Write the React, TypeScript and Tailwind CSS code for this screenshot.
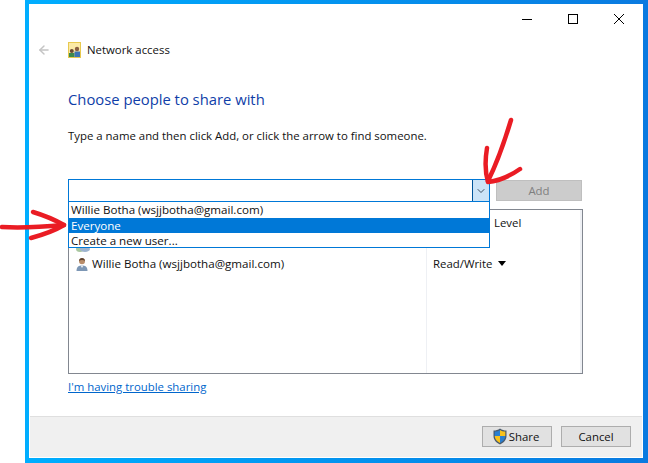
import { ArrowLeft, ChevronDown } from 'lucide-react';

function UserIcon() {
  return (
    <svg width="16" height="16" viewBox="0 0 16 16">
      <path d="M2.5 15 C2.5 10.5 5 9.5 8 9.5 C11 9.5 13.5 10.5 13.5 15 Z" fill="#7d97b5" />
      <path d="M6.5 9.5 L8 12 L9.5 9.5 Z" fill="#e8edf2" />
      <circle cx="8" cy="5.2" r="3" fill="#b98d6a" />
      <path d="M5 5 C5 1 11 1 11 5 C9.5 3.8 6.5 3.8 5 5 Z" fill="#5f4330" />
    </svg>
  );
}

function PeopleIcon() {
  return (
    <svg width="13" height="16" viewBox="0 0 13 16">
      <rect x="0.5" y="0.5" width="12" height="15" fill="#fbe9a6" stroke="#e8c94f" />
      <circle cx="3.8" cy="9" r="2" fill="#6b4a34" />
      <rect x="1" y="11" width="5.5" height="4" fill="#3d8a4d" />
      <circle cx="9" cy="7" r="2.2" fill="#8a5f42" />
      <rect x="6.5" y="9.5" width="5.5" height="5.5" fill="#3d74b5" />
    </svg>
  );
}

// only the bottom of this one shows below the open dropdown
function EveryoneIcon() {
  return (
    <svg width="18" height="16" viewBox="0 0 18 16">
      <ellipse cx="6" cy="13" rx="4" ry="3" fill="#a9c7a0" />
      <ellipse cx="11" cy="13" rx="5" ry="3" fill="#9db4cf" />
    </svg>
  );
}

function ShieldIcon() {
  return (
    <svg width="14" height="17" viewBox="0 0 14 17">
      <path d="M7 0.5 C9 2 11 2.5 13.5 2.5 L13.5 8 C13.5 12 10.5 15 7 16.5 C3.5 15 0.5 12 0.5 8 L0.5 2.5 C3 2.5 5 2 7 0.5 Z" fill="#4a5a6c" />
      <path d="M7 2 L7 8 L1.7 8 L1.7 3.6 C3.7 3.5 5.5 3 7 2 Z" fill="#2a7fd0" />
      <path d="M7 2 C8.5 3 10.3 3.5 12.3 3.6 L12.3 8 L7 8 Z" fill="#f8c21c" />
      <path d="M1.7 8 L7 8 L7 15 C4 13.7 1.9 11 1.7 8 Z" fill="#f8c21c" />
      <path d="M7 8 L12.3 8 C12.1 11 10 13.7 7 15 Z" fill="#2a7fd0" />
    </svg>
  );
}

// hand drawn red arrows on top of the screenshot
function RedArrows() {
  return (
    <svg className="absolute left-0 top-0 pointer-events-none" width="648" height="463" viewBox="0 0 648 463" fill="none" stroke="#ea1c24" strokeWidth="4.5" strokeLinecap="round" strokeLinejoin="round">
      <path d="M511 120 C505 140 497 163 488 181" />
      <path d="M487 148 C485 160 485 172 488 182 C498 181 510 176 520 169" />
      <path d="M2 227 C20 228 42 227 64 225" />
      <path d="M33 212 C43 215 55 220 64 225 C54 231 42 235 31 238" />
    </svg>
  );
}

export default function App() {
  return (
    <div className="relative w-[648px] h-[463px] overflow-hidden bg-white pl-[25px] font-['Open_Sans','Liberation_Sans',sans-serif] text-[11.4px] text-[#111111]">
      <div className="h-full bg-[#0a84e8] bg-gradient-to-r from-[#00aeff] to-[#0a7ae0] pl-[4px] pr-[5px] pt-[4px] pb-[5px]">
        <div className="h-full flex flex-col bg-white">
          <div className="flex justify-end h-[30px] items-center pr-[1px] text-black">
            <div className="w-[46px] flex justify-center">
              <svg width="10" height="10" viewBox="0 0 10 10" shapeRendering="crispEdges"><rect x="0" y="5" width="10" height="1" fill="#000" /></svg>
            </div>
            <div className="w-[46px] flex justify-center">
              <svg width="10" height="10" viewBox="0 0 10 10" shapeRendering="crispEdges"><rect x="0.5" y="0.5" width="9" height="9" fill="none" stroke="#000" /></svg>
            </div>
            <div className="w-[46px] flex justify-center">
              <svg width="10" height="10" viewBox="0 0 10 10"><path d="M0 0 L10 10 M10 0 L0 10" stroke="#000" strokeWidth="1" /></svg>
            </div>
          </div>

          <div className="flex-1 flex flex-col">
            <div className="flex items-center h-[18px] mt-[7px] pl-[8px]">
              <ArrowLeft size={14} className="text-[#c4c4c4]" strokeWidth={2.5} />
              <div className="ml-[17px] flex"><PeopleIcon /></div>
              <span className="ml-[6px] text-[11.4px]">Network access</span>
            </div>

            <div className="pl-[39px] pr-[60px]">
              <h1 className="mt-[30px] text-[14.8px] leading-[20px] text-[#0f3ea8]">Choose people to share with</h1>
              <p className="mt-[19px] leading-[16px]">Type a name and then click Add, or click the arrow to find someone.</p>

              <div className="mt-[35px] flex gap-[6px] h-[22px]">
                <div className="relative w-[422px] h-[23px] border border-[#0078d7] bg-white flex justify-end">
                  <div className="w-[17px] h-full bg-[#cce4f7] border-l border-[#005499] flex items-center justify-center">
                    <ChevronDown size={12} strokeWidth={1.6} className="text-[#1a2a3a]" />
                  </div>
                  <div className="absolute left-[-1px] top-[21px] w-[422px] h-[47px] z-10 border border-[#0078d7] bg-white leading-[15px] text-[11.6px]">
                    <div className="pl-[2px] h-[16px]">Willie Botha (wsjjbotha@gmail.com)</div>
                    <div className="pl-[2px] h-[15px] bg-[#0078d7] text-white">Everyone</div>
                    <div className="pl-[2px] h-[14px]">Create a new user...</div>
                  </div>
                </div>
                <button className="mt-[1px] w-[86px] h-[21px] bg-[#cccccc] border border-[#bfbfbf] text-[#7f7f7f] text-[11.4px]">Add</button>
              </div>

              <div className="relative mt-[8px] w-[515px] h-[165px] border border-[#828790] bg-white">
                <div className="flex h-full">
                  <div className="w-[358px] border-r border-[#eef0f4] pt-[26px] pl-[5px]">
                    <div className="flex"><EveryoneIcon /></div>
                    <div className="mt-[3px] flex items-center gap-[2px] text-[11.6px]">
                      <UserIcon />
                      <span>Willie Botha (wsjjbotha@gmail.com)</span>
                    </div>
                  </div>
                  <div className="flex-1 pl-[6px]">
                    <div className="pl-[61px] pt-[5px] leading-[16px]">Level</div>
                    <div className="mt-[24px] flex items-center gap-[6px]">
                      <span>Read/Write</span>
                      <span className="w-0 h-0 border-x-[4px] border-x-transparent border-t-[5px] border-t-black" />
                    </div>
                  </div>
                  <div className="w-[2px] bg-[#eef0f4]" />
                </div>
              </div>

              <a className="block mt-[5px] leading-[16px] text-[#0066cc] underline">I'm having trouble sharing</a>
            </div>
          </div>

          <div className="h-[41px] mb-[1px] mx-[1px] border-t border-[#dfdfdf] bg-[#f0f0f0] flex justify-end items-start gap-[9px] pt-[9px] pr-[11px]">
            <button className="w-[70px] h-[21px] bg-[#e1e1e1] border border-[#adadad] flex items-center justify-center gap-[2px] pr-[2px] text-[11.4px]">
              <ShieldIcon />
              <span>Share</span>
            </button>
            <button className="w-[70px] h-[21px] bg-[#e1e1e1] border border-[#adadad] text-[11.4px]">Cancel</button>
          </div>
        </div>
      </div>
      <RedArrows />
    </div>
  );
}
